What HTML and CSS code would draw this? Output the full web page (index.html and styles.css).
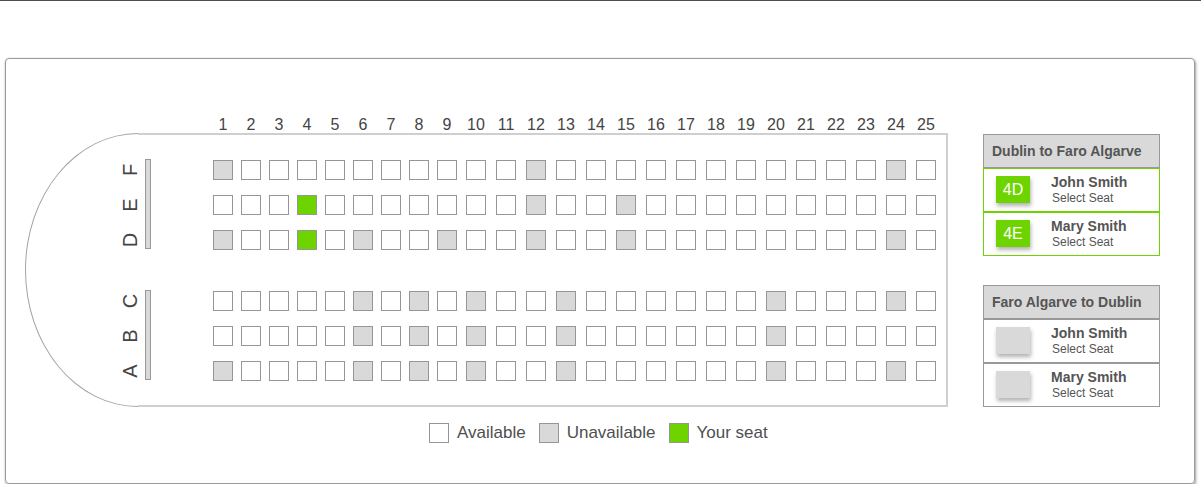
FILE: index.html
```html
<!DOCTYPE html>
<html>
<head>
<meta charset="utf-8">
<title>Seat selection</title>
<link rel="stylesheet" href="styles.css">
</head>
<body>
<div class="card">
	<div class="map">
		<div class="cols" id="cols"></div>
		<div class="fuselage">
			<div class="nose">
				<div class="letters"><span>F</span><span>E</span><span>D</span></div>
				<div class="letters"><span>C</span><span>B</span><span>A</span></div>
			</div>
			<div class="cabin">
				<div class="deck"><div class="bar"></div><div class="seats" id="deck1"></div></div>
				<div class="deck"><div class="bar"></div><div class="seats" id="deck2"></div></div>
			</div>
		</div>
		<div class="legend">
			<i class="seat"></i><span>Available</span>
			<i class="seat taken"></i><span>Unavailable</span>
			<i class="seat mine"></i><span>Your seat</span>
		</div>
	</div>
	<div class="panel">
		<div class="leg">
			<div class="leg-head">Dublin to Faro Algarve</div>
			<div class="pax picked">
				<div class="badge">4D</div>
				<div class="who"><b>John Smith</b><span>Select Seat</span></div>
			</div>
			<div class="pax picked">
				<div class="badge">4E</div>
				<div class="who"><b>Mary Smith</b><span>Select Seat</span></div>
			</div>
		</div>
		<div class="leg">
			<div class="leg-head">Faro Algarve to Dublin</div>
			<div class="pax">
				<div class="badge empty"></div>
				<div class="who"><b>John Smith</b><span>Select Seat</span></div>
			</div>
			<div class="pax">
				<div class="badge empty"></div>
				<div class="who"><b>Mary Smith</b><span>Select Seat</span></div>
			</div>
		</div>
	</div>
</div>
<script type="text/javascript">
var seatMap = {
	deck1 : [
		{ taken : [1, 12, 24],                  mine : [] },
		{ taken : [12, 15],                     mine : [4] },
		{ taken : [1, 6, 9, 12, 15, 24],        mine : [4] }
	],
	deck2 : [
		{ taken : [6, 8, 10, 13, 20, 24],       mine : [] },
		{ taken : [6, 8, 10, 13, 20],           mine : [] },
		{ taken : [1, 6, 8, 10, 13, 20, 24],    mine : [] }
	]
};
var cols = document.getElementById('cols');
for (var n = 1; n <= 25; n++)
{
	var c = document.createElement('div');
	c.innerHTML = n;
	cols.appendChild(c);
}
for (var id in seatMap)
{
	var deck = document.getElementById(id);
	for (var r = 0; r < seatMap[id].length; r++)
	{
		var row = seatMap[id][r];
		for (var s = 1; s <= 25; s++)
		{
			var o = document.createElement('div');
			o.className = 'seat';
			if (row.taken.indexOf(s) > -1) o.className += ' taken';
			if (row.mine.indexOf(s) > -1) o.className += ' mine';
			deck.appendChild(o);
		}
	}
}
</script>
</body>
</html>
```

FILE: styles.css
```css
body{margin:0; border-top:1px solid #4d4d4d; background:#fff; color:#555; font-family:"Liberation Sans", Arial, sans-serif;}

.card{box-sizing:border-box; width:1190px; height:426px; margin:57px 0 0 5px; padding:57px 0 0 19px; border:1px solid #9a9a9a; border-radius:4px; box-shadow:1px 2px 3px rgba(0,0,0,.35), 0 0 2px rgba(0,0,0,.15); display:flex; align-items:flex-start;}

.map{width:923px; flex:none;}
.cols{display:grid; grid-template-columns:repeat(9, 28px) repeat(16, 30px); margin-left:184px; height:17px; line-height:17px; font-size:16px; color:#444; text-align:center;}

.fuselage{display:flex; height:274px;}
.nose{box-sizing:border-box; width:113px; border:1px solid #a3a3a3; border-right:0; border-radius:113px 0 0 113px / 137px 0 0 137px; padding-top:26px; display:flex; flex-direction:column; align-items:flex-end; gap:41px;}
.letters{display:flex; flex-direction:column; gap:15px; margin-right:-2px; position:relative; z-index:1;}
.letters span{display:block; width:20px; height:20px; line-height:20px; text-align:center; font-size:20px; color:#444; transform:rotate(-90deg);}

.cabin{flex:1; border:2px solid #cfcfcf; border-left:0; padding-top:25px; display:flex; flex-direction:column; gap:41px;}
.deck{display:flex;}
.bar{box-sizing:border-box; width:6px; height:90px; margin:-1px 0 0 7px; background:#d9d9d9; border:1px solid #999;}
.seats{display:grid; grid-template-columns:repeat(9, 28px) repeat(16, 30px); row-gap:15px; margin-left:58px;}

.seat{box-sizing:border-box; display:block; width:20px; height:20px; border:1px solid #969696; background:#fff; justify-self:center;}
.seat.taken{background:#d9d9d9;}
.seat.mine{background:#6dd400;}

.legend{display:flex; align-items:center; margin-top:15px; padding-left:404px; font-size:17px; line-height:22px; color:#4f4f4f;}
.legend .seat{margin-right:8px;}
.legend span{margin-right:13px;}

.panel{width:177px; flex:none; margin:18px 0 0 35px;}
.leg + .leg{margin-top:29px;}
.leg-head{box-sizing:border-box; height:34px; border:1px solid #999; background:#d9d9d9; padding-left:8px; font-size:14px; font-weight:bold; line-height:32px; color:#555;}
.pax{box-sizing:border-box; height:44px; border:1px solid #999; padding:7px 0 0 12px; display:flex; align-items:flex-start;}
.pax.picked{border-color:#6dd400;}
.badge{box-sizing:border-box; flex:none; width:34px; height:27px; background:#6dd400; color:#fff; font-size:16px; line-height:27px; text-align:center; box-shadow:1px 3px 4px rgba(0,0,0,.3);}
.badge.empty{background:#d9d9d9;}
.who{margin:-2px 0 0 21px; display:flex; flex-direction:column; color:#555;}
.who b{font-size:14px; line-height:16px;}
.who span{font-size:12px; line-height:14px; padding:1px 0 0 1px;}
```
